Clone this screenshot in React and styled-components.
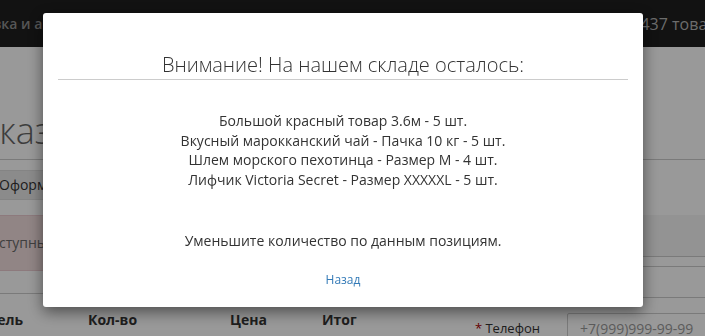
import React from "react";
import styled, { createGlobalStyle } from "styled-components";

const items = [
  "Большой красный товар 3.6м - 5 шт.",
  "Вкусный марокканский чай - Пачка 10 кг - 5 шт.",
  "Шлем морского пехотинца - Размер M - 4 шт.",
  "Лифчик Victoria Secret - Размер XXXXXL - 5 шт.",
];

const App = () => {
  return (
    <>
      <GlobalStyle />
      <Page>
        <TopBar>
          <Nav>
            <NavLink>Доставка и акции</NavLink>
            <NavLink>Гарантия</NavLink>
            <NavLink>Контакты</NavLink>
          </Nav>
          <Cart>Корзина: 437 товаров на сумму 1 250 000 руб.</Cart>
        </TopBar>

        <Main>
          <Heading>Заказ</Heading>
          <Columns>
            <LeftCol>
              <Button>
                <svg width="14" height="14" viewBox="0 0 16 16" fill="none" stroke="#333" strokeWidth="2">
                  <path d="M2 8.5l4 4 8-9" />
                </svg>
                Оформить заказ
              </Button>
              <Alert>Доступны не все товары из вашего заказа.</Alert>
              <Table>
                <Th>Модель</Th>
                <Th>Кол-во</Th>
                <Th>Цена</Th>
                <Th>Итог</Th>
              </Table>
            </LeftCol>

            <RightCol>
              <Well />
              <FormRow>
                <Label>Имя</Label>
                <Input />
              </FormRow>
              <FormRow $gap={15}>
                <Label>
                  <Star>*</Star> Телефон
                </Label>
                <Input placeholder="+7(999)999-99-99" />
              </FormRow>
            </RightCol>
          </Columns>
        </Main>
      </Page>

      <Backdrop />
      <Modal>
        <Title>Внимание! На нашем складе осталось:</Title>
        <Body>
          <List>
            {items.map((t) => (
              <li key={t}>{t}</li>
            ))}
          </List>
          <Note>Уменьшите количество по данным позициям.</Note>
          <Back href="#">Назад</Back>
        </Body>
      </Modal>
    </>
  );
};

export default App;

const GlobalStyle = createGlobalStyle`
  html, body {
    margin: 0;
    padding: 0;
    height: 100%;
    overflow: hidden;
    background: #fff;
    font-family: "Open Sans", "Noto Sans", sans-serif;
    color: #333;
  }
  * { box-sizing: border-box; }
`;

const Page = styled.div`
  width: 1000px;
  margin-left: -55px;
`;

const TopBar = styled.div`
  display: flex;
  align-items: center;
  height: 47px;
  padding: 0 7px;
  background: #1e1e1e;
  white-space: nowrap;
`;

const Nav = styled.div`
  display: flex;
  gap: 24px;
  flex: 0 0 614px;
`;

const NavLink = styled.span`
  font-size: 14px;
  font-weight: 600;
  color: #909090;
`;

const Cart = styled.span`
  font-size: 16px;
  color: #b4b4b4;
`;

const Main = styled.div`
  padding: 0 15px;
`;

const Heading = styled.h1`
  margin: 0;
  padding: 64px 0 8px;
  font-size: 36px;
  font-weight: 300;
  line-height: 1.1;
  color: #666;
  border-bottom: 1px solid #ccc;
`;

const Columns = styled.div`
  display: grid;
  grid-template-columns: 480px 1fr;
  gap: 20px;
`;

const LeftCol = styled.div`
  display: flex;
  flex-direction: column;
  align-items: flex-start;
  padding-top: 10px;
`;

const Button = styled.button`
  display: inline-flex;
  align-items: center;
  gap: 8px;
  height: 30px;
  padding: 0 16px;
  border: 1px solid #ddd;
  background: #e8e8e8;
  font-family: inherit;
  font-size: 14px;
  color: #333;
`;

const Alert = styled.div`
  align-self: stretch;
  margin-top: 15px;
  padding: 17px 20px;
  line-height: 20px;
  font-size: 14px;
  color: #6a6a6a;
  background: #f2dede;
  border: 1px solid #ebccd1;
`;

const Table = styled.div`
  align-self: stretch;
  display: grid;
  grid-template-columns: 114px 142px 92px 1fr;
  margin: 22px 0 0 6px;
  border-top: 1px solid #ccc;
  padding-top: 16px;
`;

const Th = styled.div`
  padding: 0 8px;
  font-size: 14px;
  font-weight: 700;
  line-height: 20px;
  color: #333;

  &:first-child {
    padding-left: 0;
  }
`;

const RightCol = styled.div`
  display: flex;
  flex-direction: column;
  padding-top: 55px;
`;

const Well = styled.div`
  height: 42px;
  margin-left: 107px;
  background: #f5f5f5;
  border-bottom: 1px solid #ccc;
`;

const FormRow = styled.div`
  display: grid;
  grid-template-columns: 95px 1fr;
  gap: 12px;
  align-items: center;
  margin-top: ${(p) => p.$gap || 9}px;
`;

const Label = styled.label`
  padding-right: 15px;
  padding-bottom: 2px;
  text-align: right;
  font-size: 13px;
  color: #333;
`;

const Star = styled.span`
  color: #a00;
`;

const Input = styled.input`
  height: 32px;
  padding: 0 12px;
  border: 1px solid #ccc;
  border-radius: 2px;
  font-family: inherit;
  font-size: 14px;
  color: #555;

  &::placeholder {
    color: #999;
  }
`;

const Backdrop = styled.div`
  position: fixed;
  inset: 0;
  background: rgba(0, 0, 0, 0.4);
`;

const Modal = styled.div`
  position: fixed;
  top: 13px;
  left: 43px;
  width: 600px;
  padding: 41px 15px 18px;
  background: #fff;
  border-radius: 3px;
  box-shadow: 0 5px 15px rgba(0, 0, 0, 0.5);
  text-align: center;
`;

const Title = styled.h3`
  margin: 0;
  padding-bottom: 3px;
  font-size: 20px;
  font-weight: 300;
  line-height: 1.1;
  color: #333;
  border-bottom: 1px solid #ccc;
`;

const Body = styled.div`
  padding-top: 31px;
  font-size: 14px;
  line-height: 19.5px;
  color: #333;
`;

const List = styled.ul`
  margin: 0;
  padding: 0;
  list-style: none;
`;

const Note = styled.p`
  margin: 42px 0 0;
`;

const Back = styled.a`
  display: block;
  margin-top: 20px;
  font-size: 12px;
  line-height: 18px;
  color: #337ab7;
  text-decoration: none;
`;
